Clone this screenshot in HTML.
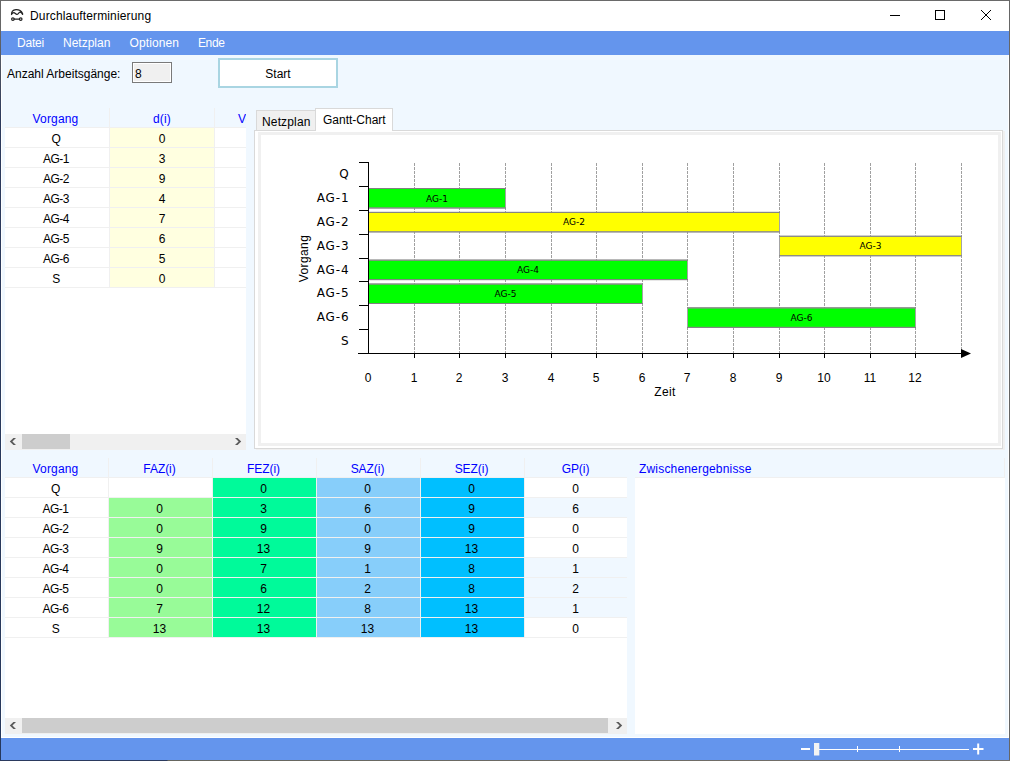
<!DOCTYPE html>
<html lang="de"><head><meta charset="utf-8"><title>Durchlaufterminierung</title>
<style>
*{box-sizing:border-box;margin:0;padding:0}
html,body{width:1010px;height:761px;overflow:hidden;background:#f0f8ff}
body{position:relative;font-family:"Liberation Sans",sans-serif;font-size:12px;color:#000}
.a{position:absolute}
.t{position:absolute;white-space:nowrap;line-height:14px}
#title{left:1px;top:1px;width:1008px;height:30px;background:#fff}
#menu{left:1px;top:31px;width:1008px;height:24px;background:#6495ed}
#menu span{position:absolute;top:5px;color:#fff;line-height:14px;white-space:nowrap}
#status{left:1px;top:738px;width:1008px;height:22px;background:#6495ed}
.bl{color:#0000ff}
.g{position:absolute;background:#fff;overflow:hidden}
.hd{position:absolute;top:0;height:20px;background:#f0f8ff;border-right:1px solid #f0f0f0;border-bottom:1px solid #f0f0f0;color:#0000ff;text-align:center;line-height:19px;padding-top:2px;letter-spacing:0.15px;white-space:nowrap}
.c{position:absolute;height:20px;border-right:1px solid #f0f0f0;border-bottom:1px solid #f0f0f0;text-align:center;line-height:19px;padding-top:2px;white-space:nowrap}
.sb{position:absolute;background:#f0f0f0}
.th{position:absolute;background:#cdcdcd}
svg{position:absolute;overflow:visible}
.vd{font-family:"DejaVu Sans","Liberation Sans",sans-serif}
</style></head>
<body>
<div class="a" style="left:0;top:0;width:1010px;height:1px;background:#6a6a6a"></div>
<div class="a" style="left:0;top:0;width:1px;height:761px;background:linear-gradient(#666 0,#666 30px,#2c3a5c 120px,#26385c 100%)"></div>
<div class="a" style="left:1009px;top:0;width:1px;height:761px;background:#666"></div>
<div class="a" style="left:0;top:760px;width:1010px;height:1px;background:linear-gradient(to right,#2b3a5e 0,#2b3a5e 167px,#66665f 168px,#75706a 100%)"></div>
<div class="a" style="left:1px;top:55px;width:1px;height:683px;background:#fff"></div><div class="a" style="left:1008px;top:55px;width:1px;height:683px;background:#fff"></div><div class="a" style="left:1px;top:737px;width:1008px;height:1px;background:#fff"></div>
<div class="a" id="title">
<svg style="left:9px;top:7px" width="16" height="16" viewBox="0 0 16 16" fill="none" stroke="#222" stroke-width="1.2" stroke-linecap="round" stroke-linejoin="round"><path d="M1.5 6.5 C1.4 4.2 2.6 1.7 6 1.6 C8.6 1.5 11.4 3 12.6 5.4 L12.6 6.5 C11.8 5 10.8 4.1 9.9 4.2 C8.7 4.4 8.2 6.4 6.9 6.4 C5.7 6.4 5 4.6 3.8 4.6 C2.8 4.6 2 5.5 1.5 6.5 Z"/><circle cx="2.9" cy="11.1" r="1.3"/><circle cx="10.7" cy="11.1" r="1.3"/><path d="M4.3 11.1 H9.4"/></svg>
<span class="t" id="ttl" style="left:29px;top:8px;letter-spacing:0.15px">Durchlaufterminierung</span>
<svg style="left:887px;top:8px" width="110" height="14" viewBox="0 0 110 14" fill="none" stroke="#000" stroke-width="1"><path d="M2 6.5 H12"/><rect x="47.5" y="1.5" width="9" height="9"/><path d="M93 1 L103 11 M103 1 L93 11"/></svg>
</div>
<div class="a" id="menu"><span id="m1" style="left:16px;letter-spacing:-0.2px">Datei</span><span id="m2" style="left:62px">Netzplan</span><span id="m3" style="left:128.5px;letter-spacing:0.1px">Optionen</span><span id="m4" style="left:197px;letter-spacing:-0.4px">Ende</span></div>
<span class="t" id="lbl" style="left:7px;top:67px">Anzahl Arbeitsgänge:</span>
<div class="a" style="left:132px;top:62px;width:40px;height:21px;background:#f0f0f0;border:1px solid #7a7a7a;box-shadow:inset 0 0 0 1px #fff"><span class="t" style="left:2px;top:4px">8</span></div>
<div class="a" style="left:218px;top:58px;width:120px;height:30px;background:#fff;border:2px solid #a9d5e2;text-align:center;line-height:28px" id="btn">Start</div>
<div class="g" id="g1" style="left:5px;top:108px;width:241px;height:342px">
<div class="hd" style="left:0;width:105px;padding-right:3px">Vorgang</div><div class="hd" style="left:105px;width:105px">d(i)</div><div class="hd" style="left:210px;width:105px;text-align:left;padding-left:23px">Vorgänger</div>
<div class="c" style="left:0;top:20px;width:105px;letter-spacing:-0.5px;padding-right:2px">Q</div><div class="c" style="left:105px;top:20px;width:105px;background:#ffffe0">0</div><div class="c" style="left:210px;top:20px;width:105px"></div>
<div class="c" style="left:0;top:40px;width:105px;letter-spacing:-0.5px;padding-right:2px">AG-1</div><div class="c" style="left:105px;top:40px;width:105px;background:#ffffe0">3</div><div class="c" style="left:210px;top:40px;width:105px"></div>
<div class="c" style="left:0;top:60px;width:105px;letter-spacing:-0.5px;padding-right:2px">AG-2</div><div class="c" style="left:105px;top:60px;width:105px;background:#ffffe0">9</div><div class="c" style="left:210px;top:60px;width:105px"></div>
<div class="c" style="left:0;top:80px;width:105px;letter-spacing:-0.5px;padding-right:2px">AG-3</div><div class="c" style="left:105px;top:80px;width:105px;background:#ffffe0">4</div><div class="c" style="left:210px;top:80px;width:105px"></div>
<div class="c" style="left:0;top:100px;width:105px;letter-spacing:-0.5px;padding-right:2px">AG-4</div><div class="c" style="left:105px;top:100px;width:105px;background:#ffffe0">7</div><div class="c" style="left:210px;top:100px;width:105px"></div>
<div class="c" style="left:0;top:120px;width:105px;letter-spacing:-0.5px;padding-right:2px">AG-5</div><div class="c" style="left:105px;top:120px;width:105px;background:#ffffe0">6</div><div class="c" style="left:210px;top:120px;width:105px"></div>
<div class="c" style="left:0;top:140px;width:105px;letter-spacing:-0.5px;padding-right:2px">AG-6</div><div class="c" style="left:105px;top:140px;width:105px;background:#ffffe0">5</div><div class="c" style="left:210px;top:140px;width:105px"></div>
<div class="c" style="left:0;top:160px;width:105px;letter-spacing:-0.5px;padding-right:2px">S</div><div class="c" style="left:105px;top:160px;width:105px;background:#ffffe0">0</div><div class="c" style="left:210px;top:160px;width:105px"></div>
<div class="sb" style="left:0;top:326px;width:241px;height:16px"></div><div class="th" style="left:17px;top:326px;width:48px;height:15px"></div>
<svg style="left:0;top:326px" width="241" height="16" viewBox="0 0 241 16" fill="#5a5a5a"><polygon points="4.8,7.5 8.4,3.9 11,3.9 7.4,7.5 11,11.1 8.4,11.1"/><polygon points="236.2,7.5 232.6,3.9 230,3.9 233.6,7.5 230,11.1 232.6,11.1"/></svg>
</div>
<div class="a" style="left:254px;top:130px;width:749px;height:319px;background:#fff;border:1px solid #d9d9d9;box-shadow:2px 1px 0 #f0f0f0"></div>
<div class="a" style="left:256px;top:110px;width:60px;height:20px;background:#f0f0f0;border:1px solid #d9d9d9;border-bottom:none"><span class="t" id="tab1" style="left:5px;top:4px;letter-spacing:0.15px">Netzplan</span></div>
<div class="a" style="left:315px;top:108px;width:78px;height:23px;background:#fff;border:1px solid #d9d9d9;border-bottom:none"><span class="t" id="tab2" style="left:7px;top:4px">Gantt-Chart</span></div>
<div class="a" style="left:258px;top:132px;width:743px;height:314px;background:#fff;border:3px solid #f0f0f0"></div>
<svg style="left:0;top:0" width="1010" height="761" viewBox="0 0 1010 761">
<path d="M414.5 163 V353" stroke="#a0a0a0" stroke-width="1" stroke-dasharray="3 1" fill="none"/>
<path d="M459.5 163 V353" stroke="#a0a0a0" stroke-width="1" stroke-dasharray="3 1" fill="none"/>
<path d="M505.5 163 V353" stroke="#a0a0a0" stroke-width="1" stroke-dasharray="3 1" fill="none"/>
<path d="M551.5 163 V353" stroke="#a0a0a0" stroke-width="1" stroke-dasharray="3 1" fill="none"/>
<path d="M596.5 163 V353" stroke="#a0a0a0" stroke-width="1" stroke-dasharray="3 1" fill="none"/>
<path d="M642.5 163 V353" stroke="#a0a0a0" stroke-width="1" stroke-dasharray="3 1" fill="none"/>
<path d="M687.5 163 V353" stroke="#a0a0a0" stroke-width="1" stroke-dasharray="3 1" fill="none"/>
<path d="M733.5 163 V353" stroke="#a0a0a0" stroke-width="1" stroke-dasharray="3 1" fill="none"/>
<path d="M779.5 163 V353" stroke="#a0a0a0" stroke-width="1" stroke-dasharray="3 1" fill="none"/>
<path d="M824.5 163 V353" stroke="#a0a0a0" stroke-width="1" stroke-dasharray="3 1" fill="none"/>
<path d="M870.5 163 V353" stroke="#a0a0a0" stroke-width="1" stroke-dasharray="3 1" fill="none"/>
<path d="M915.5 163 V353" stroke="#a0a0a0" stroke-width="1" stroke-dasharray="3 1" fill="none"/>
<path d="M961.5 163 V353" stroke="#a0a0a0" stroke-width="1" stroke-dasharray="3 1" fill="none"/>
<rect x="368.5" y="188.50" width="137" height="19.5" fill="#00ff00" stroke="#a4a4a4" stroke-width="1"/>
<path d="M368 188.50 H506 M368 208.00 H506" stroke="#808080" stroke-width="1" fill="none"/>
<text class="vd" x="437.0" y="201.5" font-size="9" text-anchor="middle" fill="#000">AG-1</text>
<rect x="368.5" y="212.38" width="411" height="19.5" fill="#ffff00" stroke="#a4a4a4" stroke-width="1"/>
<path d="M368 212.38 H780 M368 231.88 H780" stroke="#808080" stroke-width="1" fill="none"/>
<text class="vd" x="574.0" y="225.4" font-size="9" text-anchor="middle" fill="#000">AG-2</text>
<rect x="779.5" y="236.25" width="182" height="19.5" fill="#ffff00" stroke="#a4a4a4" stroke-width="1"/>
<path d="M779 236.25 H962 M779 255.75 H962" stroke="#808080" stroke-width="1" fill="none"/>
<text class="vd" x="870.5" y="249.2" font-size="9" text-anchor="middle" fill="#000">AG-3</text>
<rect x="368.5" y="260.12" width="319" height="19.5" fill="#00ff00" stroke="#a4a4a4" stroke-width="1"/>
<path d="M368 260.12 H688 M368 279.62 H688" stroke="#808080" stroke-width="1" fill="none"/>
<text class="vd" x="528.0" y="273.1" font-size="9" text-anchor="middle" fill="#000">AG-4</text>
<rect x="368.5" y="284.00" width="274" height="19.5" fill="#00ff00" stroke="#a4a4a4" stroke-width="1"/>
<path d="M368 284.00 H643 M368 303.50 H643" stroke="#808080" stroke-width="1" fill="none"/>
<text class="vd" x="505.5" y="297.0" font-size="9" text-anchor="middle" fill="#000">AG-5</text>
<rect x="687.5" y="307.88" width="228" height="19.5" fill="#00ff00" stroke="#a4a4a4" stroke-width="1"/>
<path d="M687 307.88 H916 M687 327.38 H916" stroke="#808080" stroke-width="1" fill="none"/>
<text class="vd" x="801.5" y="320.9" font-size="9" text-anchor="middle" fill="#000">AG-6</text>
<path d="M368.5 162 V353.5 M358 353.5 H962" stroke="#000" stroke-width="1" fill="none"/>
<path d="M359 162.5 H368" stroke="#000" stroke-width="1"/>
<path d="M359 186.5 H368" stroke="#000" stroke-width="1"/>
<path d="M359 210.5 H368" stroke="#000" stroke-width="1"/>
<path d="M359 234.5 H368" stroke="#000" stroke-width="1"/>
<path d="M359 258.5 H368" stroke="#000" stroke-width="1"/>
<path d="M359 281.5 H368" stroke="#000" stroke-width="1"/>
<path d="M359 305.5 H368" stroke="#000" stroke-width="1"/>
<path d="M359 329.5 H368" stroke="#000" stroke-width="1"/>
<path d="M414.5 353 V358" stroke="#000" stroke-width="1"/>
<path d="M459.5 353 V358" stroke="#000" stroke-width="1"/>
<path d="M505.5 353 V358" stroke="#000" stroke-width="1"/>
<path d="M551.5 353 V358" stroke="#000" stroke-width="1"/>
<path d="M596.5 353 V358" stroke="#000" stroke-width="1"/>
<path d="M642.5 353 V358" stroke="#000" stroke-width="1"/>
<path d="M687.5 353 V358" stroke="#000" stroke-width="1"/>
<path d="M733.5 353 V358" stroke="#000" stroke-width="1"/>
<path d="M779.5 353 V358" stroke="#000" stroke-width="1"/>
<path d="M824.5 353 V358" stroke="#000" stroke-width="1"/>
<path d="M870.5 353 V358" stroke="#000" stroke-width="1"/>
<path d="M915.5 353 V358" stroke="#000" stroke-width="1"/>
<path d="M961 349 L971 353.5 L961 358 Z" fill="#000"/>
<text class="vd" x="349.5" y="178.0" font-size="12" text-anchor="end" fill="#000" letter-spacing="0.9">Q</text>
<text class="vd" x="349.5" y="201.9" font-size="12" text-anchor="end" fill="#000" letter-spacing="0.9">AG-1</text>
<text class="vd" x="349.5" y="225.8" font-size="12" text-anchor="end" fill="#000" letter-spacing="0.9">AG-2</text>
<text class="vd" x="349.5" y="249.6" font-size="12" text-anchor="end" fill="#000" letter-spacing="0.9">AG-3</text>
<text class="vd" x="349.5" y="273.5" font-size="12" text-anchor="end" fill="#000" letter-spacing="0.9">AG-4</text>
<text class="vd" x="349.5" y="297.4" font-size="12" text-anchor="end" fill="#000" letter-spacing="0.9">AG-5</text>
<text class="vd" x="349.5" y="321.2" font-size="12" text-anchor="end" fill="#000" letter-spacing="0.9">AG-6</text>
<text class="vd" x="349.5" y="345.1" font-size="12" text-anchor="end" fill="#000" letter-spacing="0.9">S</text>
<text x="308" y="258.5" font-size="12" text-anchor="middle" fill="#000" transform="rotate(-90 308 258.5)" font-family="Liberation Sans, sans-serif" letter-spacing="0.4">Vorgang</text>
<text x="368.0" y="382" font-size="12" text-anchor="middle" fill="#000" font-family="Liberation Sans, sans-serif">0</text>
<text x="414.0" y="382" font-size="12" text-anchor="middle" fill="#000" font-family="Liberation Sans, sans-serif">1</text>
<text x="459.0" y="382" font-size="12" text-anchor="middle" fill="#000" font-family="Liberation Sans, sans-serif">2</text>
<text x="505.0" y="382" font-size="12" text-anchor="middle" fill="#000" font-family="Liberation Sans, sans-serif">3</text>
<text x="551.0" y="382" font-size="12" text-anchor="middle" fill="#000" font-family="Liberation Sans, sans-serif">4</text>
<text x="596.0" y="382" font-size="12" text-anchor="middle" fill="#000" font-family="Liberation Sans, sans-serif">5</text>
<text x="642.0" y="382" font-size="12" text-anchor="middle" fill="#000" font-family="Liberation Sans, sans-serif">6</text>
<text x="687.0" y="382" font-size="12" text-anchor="middle" fill="#000" font-family="Liberation Sans, sans-serif">7</text>
<text x="733.0" y="382" font-size="12" text-anchor="middle" fill="#000" font-family="Liberation Sans, sans-serif">8</text>
<text x="779.0" y="382" font-size="12" text-anchor="middle" fill="#000" font-family="Liberation Sans, sans-serif">9</text>
<text x="824.0" y="382" font-size="12" text-anchor="middle" fill="#000" font-family="Liberation Sans, sans-serif">10</text>
<text x="870.0" y="382" font-size="12" text-anchor="middle" fill="#000" font-family="Liberation Sans, sans-serif">11</text>
<text x="915.0" y="382" font-size="12" text-anchor="middle" fill="#000" font-family="Liberation Sans, sans-serif">12</text>
<text x="665" y="396" font-size="12" text-anchor="middle" fill="#000" font-family="Liberation Sans, sans-serif" letter-spacing="0.4">Zeit</text>
</svg>
<div class="g" id="g2" style="left:5px;top:458px;width:622px;height:276px">
<div class="hd" style="left:0px;width:104px;padding-right:2px;letter-spacing:0.15px">Vorgang</div>
<div class="hd" style="left:104px;width:104px;padding-right:2px;letter-spacing:-0.05px">FAZ(i)</div>
<div class="hd" style="left:208px;width:104px;padding-right:2px;letter-spacing:-0.05px">FEZ(i)</div>
<div class="hd" style="left:312px;width:104px;padding-right:2px;letter-spacing:-0.05px">SAZ(i)</div>
<div class="hd" style="left:416px;width:104px;padding-right:2px;letter-spacing:-0.05px">SEZ(i)</div>
<div class="hd" style="left:520px;width:104px;padding-right:2px;letter-spacing:-0.05px">GP(i)</div>
<div class="c" style="left:0px;top:20px;width:104px;padding-right:2px;letter-spacing:-0.5px">Q</div>
<div class="c" style="left:104px;top:20px;width:104px;padding-right:2px"></div>
<div class="c" style="left:208px;top:20px;width:104px;padding-right:2px;background:#00fa9a">0</div>
<div class="c" style="left:312px;top:20px;width:104px;padding-right:2px;background:#87cefa">0</div>
<div class="c" style="left:416px;top:20px;width:104px;padding-right:2px;background:#00bfff">0</div>
<div class="c" style="left:520px;top:20px;width:104px;padding-right:2px">0</div>
<div class="c" style="left:0px;top:40px;width:104px;padding-right:2px;letter-spacing:-0.5px">AG-1</div>
<div class="c" style="left:104px;top:40px;width:104px;padding-right:2px;background:#98fb98">0</div>
<div class="c" style="left:208px;top:40px;width:104px;padding-right:2px;background:#00fa9a">3</div>
<div class="c" style="left:312px;top:40px;width:104px;padding-right:2px;background:#87cefa">6</div>
<div class="c" style="left:416px;top:40px;width:104px;padding-right:2px;background:#00bfff">9</div>
<div class="c" style="left:520px;top:40px;width:104px;padding-right:2px;background:#f0f8ff">6</div>
<div class="c" style="left:0px;top:60px;width:104px;padding-right:2px;letter-spacing:-0.5px">AG-2</div>
<div class="c" style="left:104px;top:60px;width:104px;padding-right:2px;background:#98fb98">0</div>
<div class="c" style="left:208px;top:60px;width:104px;padding-right:2px;background:#00fa9a">9</div>
<div class="c" style="left:312px;top:60px;width:104px;padding-right:2px;background:#87cefa">0</div>
<div class="c" style="left:416px;top:60px;width:104px;padding-right:2px;background:#00bfff">9</div>
<div class="c" style="left:520px;top:60px;width:104px;padding-right:2px">0</div>
<div class="c" style="left:0px;top:80px;width:104px;padding-right:2px;letter-spacing:-0.5px">AG-3</div>
<div class="c" style="left:104px;top:80px;width:104px;padding-right:2px;background:#98fb98">9</div>
<div class="c" style="left:208px;top:80px;width:104px;padding-right:2px;background:#00fa9a">13</div>
<div class="c" style="left:312px;top:80px;width:104px;padding-right:2px;background:#87cefa">9</div>
<div class="c" style="left:416px;top:80px;width:104px;padding-right:2px;background:#00bfff">13</div>
<div class="c" style="left:520px;top:80px;width:104px;padding-right:2px">0</div>
<div class="c" style="left:0px;top:100px;width:104px;padding-right:2px;letter-spacing:-0.5px">AG-4</div>
<div class="c" style="left:104px;top:100px;width:104px;padding-right:2px;background:#98fb98">0</div>
<div class="c" style="left:208px;top:100px;width:104px;padding-right:2px;background:#00fa9a">7</div>
<div class="c" style="left:312px;top:100px;width:104px;padding-right:2px;background:#87cefa">1</div>
<div class="c" style="left:416px;top:100px;width:104px;padding-right:2px;background:#00bfff">8</div>
<div class="c" style="left:520px;top:100px;width:104px;padding-right:2px;background:#f0f8ff">1</div>
<div class="c" style="left:0px;top:120px;width:104px;padding-right:2px;letter-spacing:-0.5px">AG-5</div>
<div class="c" style="left:104px;top:120px;width:104px;padding-right:2px;background:#98fb98">0</div>
<div class="c" style="left:208px;top:120px;width:104px;padding-right:2px;background:#00fa9a">6</div>
<div class="c" style="left:312px;top:120px;width:104px;padding-right:2px;background:#87cefa">2</div>
<div class="c" style="left:416px;top:120px;width:104px;padding-right:2px;background:#00bfff">8</div>
<div class="c" style="left:520px;top:120px;width:104px;padding-right:2px;background:#f0f8ff">2</div>
<div class="c" style="left:0px;top:140px;width:104px;padding-right:2px;letter-spacing:-0.5px">AG-6</div>
<div class="c" style="left:104px;top:140px;width:104px;padding-right:2px;background:#98fb98">7</div>
<div class="c" style="left:208px;top:140px;width:104px;padding-right:2px;background:#00fa9a">12</div>
<div class="c" style="left:312px;top:140px;width:104px;padding-right:2px;background:#87cefa">8</div>
<div class="c" style="left:416px;top:140px;width:104px;padding-right:2px;background:#00bfff">13</div>
<div class="c" style="left:520px;top:140px;width:104px;padding-right:2px;background:#f0f8ff">1</div>
<div class="c" style="left:0px;top:160px;width:104px;padding-right:2px;letter-spacing:-0.5px">S</div>
<div class="c" style="left:104px;top:160px;width:104px;padding-right:2px;background:#98fb98">13</div>
<div class="c" style="left:208px;top:160px;width:104px;padding-right:2px;background:#00fa9a">13</div>
<div class="c" style="left:312px;top:160px;width:104px;padding-right:2px;background:#87cefa">13</div>
<div class="c" style="left:416px;top:160px;width:104px;padding-right:2px;background:#00bfff">13</div>
<div class="c" style="left:520px;top:160px;width:104px;padding-right:2px">0</div>
<div class="sb" style="left:0;top:260px;width:622px;height:16px"></div><div class="th" style="left:17px;top:260px;width:586px;height:15px"></div>
<svg style="left:0;top:260px" width="622" height="16" viewBox="0 0 622 16" fill="#5a5a5a"><polygon points="4.8,7.5 8.4,3.9 11,3.9 7.4,7.5 11,11.1 8.4,11.1"/><polygon points="617.2,7.5 613.6,3.9 611,3.9 614.6,7.5 611,11.1 613.6,11.1"/></svg>
</div>
<div class="a" style="left:635px;top:458px;width:370px;height:20px;border-right:1px solid #f0f0f0;border-bottom:1px solid #f0f0f0"></div>
<span class="t bl" id="zw" style="left:639px;top:462px;letter-spacing:0.18px">Zwischenergebnisse</span>
<div class="a" style="left:635px;top:478px;width:370px;height:256px;background:#fff"></div>
<div class="a" id="status"><svg style="left:0;top:0" width="1008" height="22" viewBox="0 0 1008 22"><path d="M800 11 H809" stroke="#fff" stroke-width="2"/><path d="M818 11.5 H968" stroke="#fff" stroke-width="1"/><path d="M856.5 8 V14 M898.5 8 V14" stroke="#fff" stroke-width="1"/><rect x="813" y="5" width="5.3" height="12.5" fill="#f3f3f3"/><path d="M972 11 H982.5 M977.2 5.5 V16.5" stroke="#fff" stroke-width="2"/></svg></div>
</body></html>
